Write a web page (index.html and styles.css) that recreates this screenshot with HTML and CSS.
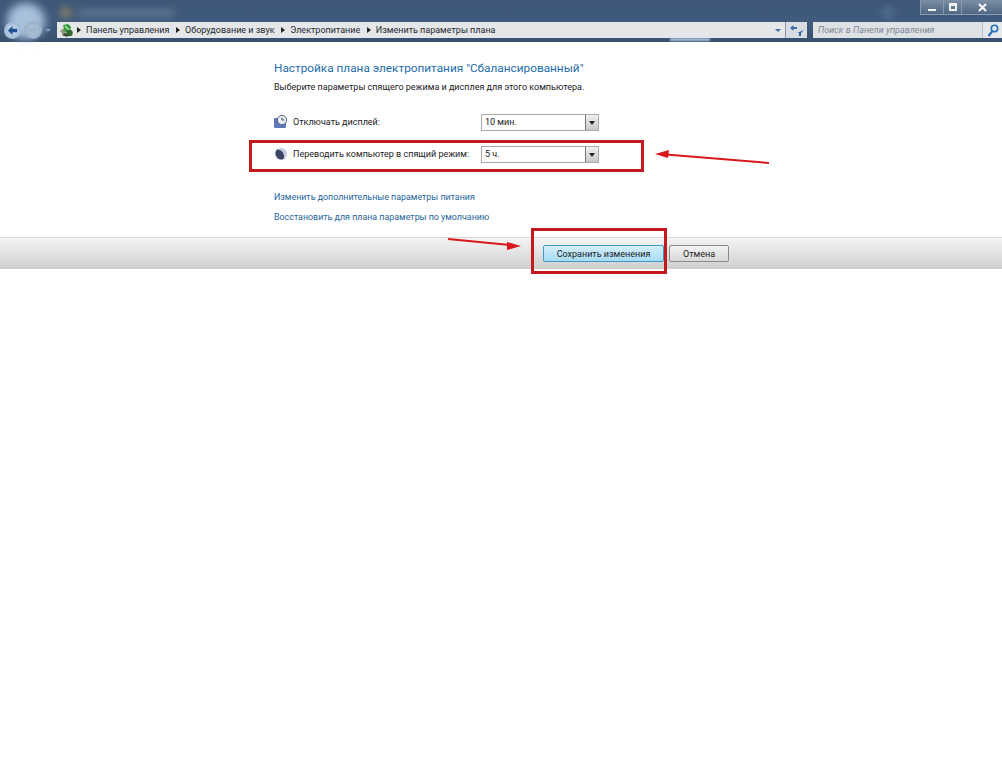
FILE: index.html
```html
<!DOCTYPE html>
<html lang="en">
<head>
    <meta charset="UTF-8">
    <title>Изменить параметры плана</title>
    <link rel="stylesheet" href="styles.css">
</head>
<body>
<div id="wrap">
    <header class="top">
        <div class="glow glow-orb"></div>
        <div class="glow glow-tab"></div>
        <div class="glow glow-title"></div>
        <div class="glow glow-dot"></div>
        <div class="glow glow-under"></div>
        <div class="caption">
            <a class="cap-min"><i></i></a><a class="cap-max"><i></i></a><a class="cap-close">
                <svg width="9" height="9" viewBox="0 0 10 10"><path d="M1 1l8 8M9 1l-8 8" stroke="#f2f4f6" stroke-width="2.4"/></svg>
            </a>
        </div>
        <div class="toolbar">
            <div class="navs">
                <a class="back"><svg width="11" height="11" viewBox="0 0 12 12"><path d="M1 6l5-5v3h5v4H6v3z" fill="#1f4f94"/></svg></a>
                <a class="forward"><svg width="10" height="10" viewBox="0 0 12 12"><path d="M11 6L6 1v3H1v4h5v3z" fill="#a3b6cb"/></svg></a>
                <span class="nav-drop"></span>
            </div>
            <div class="address">
                <svg class="cp-icon" width="15" height="15" viewBox="0 0 15 15">
                    <path d="M1 8l4-3 3 2-3 6z" fill="#8a9a72"/>
                    <path d="M4 2l5-1 3 3-1 4-5 1z" fill="#2f9a3f"/>
                    <path d="M6 3l4 4" stroke="#bfe8a8" stroke-width="1.4"/>
                    <circle cx="10.5" cy="10" r="3.2" fill="#2f6b30"/>
                    <path d="M3 12l5 2 2-2-4-2z" fill="#3f4a3a"/>
                </svg>
                <span class="sep"></span><span class="crumb">Панель управления</span>
                <span class="sep"></span><span class="crumb">Оборудование и звук</span>
                <span class="sep"></span><span class="crumb">Электропитание</span>
                <span class="sep"></span><span class="crumb">Изменить параметры плана</span>
                <span class="addr-drop"></span>
            </div>
            <a class="refresh">
                <svg width="14" height="13" viewBox="0 0 14 13"><path d="M0 4l3.5-3v2H7v2H3.500v2z" fill="#3a6ea8"/><path d="M14 6l-3 3v3H9V9H7z" fill="#2f659f"/></svg>
            </a>
            <div class="search">
                <span class="search-text">Поиск в Панели управления</span>
                <a class="search-btn">
                    <svg width="12" height="13" viewBox="0 0 12 13"><circle cx="7.5" cy="4.5" r="3.2" fill="#dbe8f4" stroke="#2a6db0" stroke-width="1.6"/><path d="M5 7.5L1.500 12" stroke="#2a6db0" stroke-width="2.2"/></svg>
                </a>
            </div>
        </div>
    </header>

    <main class="content">
        <h1 class="title">Настройка плана электропитания "Сбалансированный"</h1>
        <p class="lead">Выберите параметры спящего режима и дисплея для этого компьютера.</p>
        <div class="row row-display">
            <svg class="row-icon" width="14" height="14" viewBox="0 0 14 14">
                <rect x="0" y="3" width="12" height="10" rx="1" fill="#5f78b8"/>
                <circle cx="8" cy="5" r="4.6" fill="#eef1f6" stroke="#56648a"/>
                <path d="M8 2.5V5h2.2" fill="none" stroke="#39466a"/>
            </svg>
            <span class="row-label">Отключать дисплей:</span>
            <div class="select"><span>10 мин.</span><a class="select-btn"></a></div>
        </div>
        <div class="row row-sleep">
            <svg class="row-icon" width="14" height="14" viewBox="0 0 14 14">
                <circle cx="7" cy="7" r="6" fill="#c3cbdc"/>
                <path d="M3 2.5a7 7 0 0 1 6.5 9.6A6 6 0 0 1 3 2.5z" fill="#3a4563"/>
            </svg>
            <span class="row-label">Переводить компьютер в спящий режим:</span>
            <div class="select"><span>5 ч.</span><a class="select-btn"></a></div>
        </div>
        <a class="link link-first">Изменить дополнительные параметры питания</a>
        <a class="link link-second">Восстановить для плана параметры по умолчанию</a>
    </main>

    <footer class="bar">
        <button class="btn btn-save">Сохранить изменения</button>
        <button class="btn btn-cancel">Отмена</button>
    </footer>

    <!-- red marks drawn over the screenshot -->
    <div class="mark mark-row"></div>
    <div class="mark mark-save"></div>
    <svg class="arrows" width="1002" height="300" viewBox="0 0 1002 300">
        <path d="M769 163L666 154.5" stroke="#d8181c" stroke-width="2"/>
        <path d="M655 154l14-4-1 8z" fill="#d8181c"/>
        <path d="M448 239l62 6" stroke="#d8181c" stroke-width="2"/>
        <path d="M521 246l-14-4 0 8z" fill="#d8181c"/>
    </svg>
</div>
</body>
</html>
```

FILE: styles.css
```css
html, body {
    margin: 0;
    background: #fff;
}
body {
    font-family: Roboto, "Liberation Sans", sans-serif;
    color: #222;
}
a {
    display: block;
}
#wrap {
    position: relative;
    width: 1002px;
    height: 768px;
    overflow: hidden;
}

/* window chrome */
.top {
    position: relative;
    height: 42px;
    background: linear-gradient(#3e5777, #405b7c 60%, #38506f);
    box-sizing: border-box;
    padding-top: 22px;
}
.glow {
    position: absolute;
    filter: blur(4px);
}
.glow-orb {
    left: 7px;
    top: 3px;
    width: 38px;
    height: 36px;
    border-radius: 50%;
    background: #a9c0dc;
}
.glow-tab {
    left: 62px;
    top: 8px;
    width: 8px;
    height: 9px;
    background: #a6925f;
}
.glow-title {
    left: 78px;
    top: 11px;
    width: 96px;
    height: 4px;
    background: #7b8ea8;
}
.glow-dot {
    left: 884px;
    top: 7px;
    width: 8px;
    height: 10px;
    border-radius: 50%;
    background: #5f7fa3;
}
.glow-under {
    left: 670px;
    top: 38px;
    width: 40px;
    height: 3px;
    background: #a8c4de;
    filter: blur(1px);
}
.caption {
    position: absolute;
    right: 0;
    top: 0;
    display: flex;
    height: 14px;
    border: 1px solid #8b9cb2;
    border-top: 0;
    border-right: 0;
    background: linear-gradient(#7c8ea3, #4e6785);
}
.caption a {
    display: flex;
    align-items: center;
    justify-content: center;
    height: 14px;
}
.cap-min {
    width: 22px;
    border-right: 1px solid #8b9cb2;
}
.cap-min i {
    width: 8px;
    height: 2px;
    margin-top: 5px;
    background: #f2f4f6;
}
.cap-max {
    width: 17px;
    border-right: 1px solid #8b9cb2;
}
.cap-max i {
    width: 4px;
    height: 3px;
    border: 2px solid #f2f4f6;
    border-top-width: 3px;
}
.cap-close {
    width: 40px;
}
.toolbar {
    position: relative;
    display: flex;
    height: 16px;
}
.navs {
    display: flex;
    align-items: center;
    width: 57px;
    padding-left: 4px;
    box-sizing: border-box;
}
.navs a {
    display: flex;
    flex: none;
    align-items: center;
    justify-content: center;
    border-radius: 50%;
}
.back {
    width: 17px;
    height: 17px;
    background: radial-gradient(#d2e0f0, #86a6cb);
}
.forward {
    width: 18px;
    height: 18px;
    margin-left: 3px;
    background: radial-gradient(#b8c8da, #8ba6c2);
}
.nav-drop {
    margin-left: 3px;
    border: 3px solid transparent;
    border-top: 3px solid #7ea0c8;
    border-bottom: 0;
}
.address {
    display: flex;
    align-items: center;
    width: 728px;
    background: #e4e6e8;
    font-size: 9px;
    color: #26292e;
    box-sizing: border-box;
    padding-left: 2px;
    white-space: nowrap;
}
.cp-icon {
    margin-right: 3px;
}
.sep {
    margin: 0 5px 0 0;
    border: 3px solid transparent;
    border-left: 4px solid #222;
    border-right: 0;
}
.crumb {
    margin-right: 6.6px;
}
.addr-drop {
    margin-left: auto;
    margin-right: 4px;
    border: 3px solid transparent;
    border-top: 3px solid #3c6fa8;
    border-bottom: 0;
}
.refresh {
    display: flex;
    align-items: center;
    justify-content: center;
    width: 21px;
    background: #d9dde2;
    border-left: 1px solid #8c98a6;
}
.search {
    display: flex;
    align-items: center;
    width: 189px;
    margin-left: 6px;
    background: #dfe2e5;
    font-size: 9px;
    font-style: italic;
    color: #7d8794;
    box-sizing: border-box;
    padding-left: 5px;
}
.search-btn {
    display: flex;
    align-items: center;
    justify-content: center;
    width: 19px;
    height: 16px;
    margin-left: auto;
    background: #e6e9ec;
    border-left: 1px solid #b4bbc4;
}

/* main column */
.content {
    padding: 18px 0 0 274px;
    height: 195px;
    box-sizing: border-box;
}
.title {
    margin: 0;
    font-size: 11.8px;
    line-height: 16px;
    font-weight: 400;
    color: #1d6ca8;
}
.lead {
    margin: 4px 0 0;
    font-size: 9px;
    line-height: 14px;
}
.row {
    display: flex;
    align-items: center;
    height: 18px;
    font-size: 9px;
}
.row-display {
    margin-top: 19px;
}
.row-sleep {
    margin-top: 14px;
}
.row-icon {
    flex: none;
    margin-right: 5px;
}
.row-label {
    width: 188px;
    white-space: nowrap;
}
.select {
    display: flex;
    align-items: center;
    justify-content: space-between;
    width: 118px;
    height: 17px;
    border: 1px solid #a9a9a9;
    box-sizing: border-box;
    padding-left: 3px;
    background: #fff;
}
.select-btn {
    position: relative;
    width: 12px;
    height: 15px;
    border-left: 1px solid #777;
    background: linear-gradient(#f0f0f0, #c8c8c8);
}
.select-btn::after {
    content: "";
    position: absolute;
    left: 3px;
    top: 6px;
    border: 3px solid transparent;
    border-top: 4px solid #222;
    border-bottom: 0;
}
.link {
    font-size: 8.9px;
    line-height: 14px;
    color: #1f6499;
}
.link-first {
    margin-top: 27px;
}
.link-second {
    margin-top: 6px;
}

/* bottom strip */
.bar {
    display: flex;
    align-items: center;
    height: 32px;
    padding: 0 0 0 543px;
    box-sizing: border-box;
    border-top: 1px solid #d8d8d8;
    background: linear-gradient(#f4f4f4, #cfcfcf);
}
.btn {
    height: 17px;
    padding: 0;
    font: 9px Roboto, "Liberation Sans", sans-serif;
    color: #222;
    border-radius: 2px;
}
.btn-save {
    width: 121px;
    border: 1px solid #3d9ac4;
    background: linear-gradient(#d7eefa, #a4dcf4);
}
.btn-cancel {
    width: 60px;
    margin-left: 5px;
    border: 1px solid #8a8a8a;
    background: linear-gradient(#f4f4f4, #d8d8d8);
}

/* overlays */
.mark {
    position: absolute;
    box-sizing: border-box;
    border: 3px solid #c5181f;
}
.mark-row {
    left: 249px;
    top: 140px;
    width: 395px;
    height: 32px;
}
.mark-save {
    left: 531px;
    top: 228px;
    width: 136px;
    height: 46px;
}
.arrows {
    position: absolute;
    left: 0;
    top: 0;
}
```
